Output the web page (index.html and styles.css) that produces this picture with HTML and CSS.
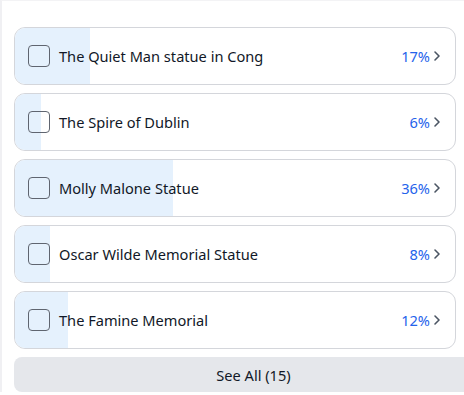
FILE: index.html
```html
<!DOCTYPE html>
<html>
<head>
<meta charset="utf-8">
<link rel="stylesheet" href="styles.css">
</head>
<body>
<div class="page">
  <div class="list">
    <div class="card">
      <div class="fill" style="width:17%"></div>
      <span class="box"></span>
      <span class="label">The Quiet Man statue in Cong</span>
      <span class="pct">17%</span>
      <svg class="chev" width="8" height="12" viewBox="0 0 8 12"><path d="M2 2l4 4-4 4" fill="none" stroke="#4b5563" stroke-width="1.6" stroke-linecap="round" stroke-linejoin="round"/></svg>
    </div>
    <div class="card">
      <div class="fill" style="width:6%"></div>
      <span class="box"></span>
      <span class="label">The Spire of Dublin</span>
      <span class="pct">6%</span>
      <svg class="chev" width="8" height="12" viewBox="0 0 8 12"><path d="M2 2l4 4-4 4" fill="none" stroke="#4b5563" stroke-width="1.6" stroke-linecap="round" stroke-linejoin="round"/></svg>
    </div>
    <div class="card">
      <div class="fill" style="width:36%"></div>
      <span class="box"></span>
      <span class="label">Molly Malone Statue</span>
      <span class="pct">36%</span>
      <svg class="chev" width="8" height="12" viewBox="0 0 8 12"><path d="M2 2l4 4-4 4" fill="none" stroke="#4b5563" stroke-width="1.6" stroke-linecap="round" stroke-linejoin="round"/></svg>
    </div>
    <div class="card">
      <div class="fill" style="width:8%"></div>
      <span class="box"></span>
      <span class="label">Oscar Wilde Memorial Statue</span>
      <span class="pct">8%</span>
      <svg class="chev" width="8" height="12" viewBox="0 0 8 12"><path d="M2 2l4 4-4 4" fill="none" stroke="#4b5563" stroke-width="1.6" stroke-linecap="round" stroke-linejoin="round"/></svg>
    </div>
    <div class="card">
      <div class="fill" style="width:12%"></div>
      <span class="box"></span>
      <span class="label">The Famine Memorial</span>
      <span class="pct">12%</span>
      <svg class="chev" width="8" height="12" viewBox="0 0 8 12"><path d="M2 2l4 4-4 4" fill="none" stroke="#4b5563" stroke-width="1.6" stroke-linecap="round" stroke-linejoin="round"/></svg>
    </div>
  </div>
  <button class="see-all">See All (15)</button>
</div>
</body>
</html>
```
FILE: styles.css
```css
html, body {
  margin: 0;
  padding: 0;
  background: #fff;
  overflow: hidden;
}
body {
  font-family: "Noto Sans", "Open Sans", sans-serif;
  color: #111827;
  width: 464px;
  height: 395px;
}
.page {
  border-left: 2px solid #f0f0f3;
  border-top: 1px solid #f3f3f5;
  padding: 26px 0 0 12px;
  width: 450px;
}
.list {
  display: flex;
  flex-direction: column;
  gap: 8px;
  width: 442px;
}
.card {
  position: relative;
  height: 58px;
  box-sizing: border-box;
  border: 1px solid #d4d6db;
  border-radius: 11px;
  overflow: hidden;
  display: flex;
  align-items: center;
  padding: 0 14px 0 13px;
  background: #fff;
}
.fill {
  position: absolute;
  left: 0;
  top: 0;
  bottom: 0;
  background: #e5f1fd;
}
.box {
  position: relative;
  width: 22px;
  height: 22px;
  box-sizing: border-box;
  border: 1.5px solid #5f6570;
  border-radius: 4px;
  flex: none;
}
.label {
  position: relative;
  margin-left: 9px;
  font-size: 14.6px;
  flex: 1;
}
.pct {
  position: relative;
  color: #2563eb;
  font-size: 14.6px;
}
.chev {
  position: relative;
  margin-left: 3px;
  flex: none;
}
.see-all {
  display: block;
  margin-top: 8px;
  width: 100%;
  height: 35px;
  border: none;
  border-radius: 8px 0 0 8px;
  background: #e5e7eb;
  color: #111827;
  font-family: "Noto Sans", "Open Sans", sans-serif;
  font-size: 14.6px;
  padding: 0 0 0 29px;
}
```
